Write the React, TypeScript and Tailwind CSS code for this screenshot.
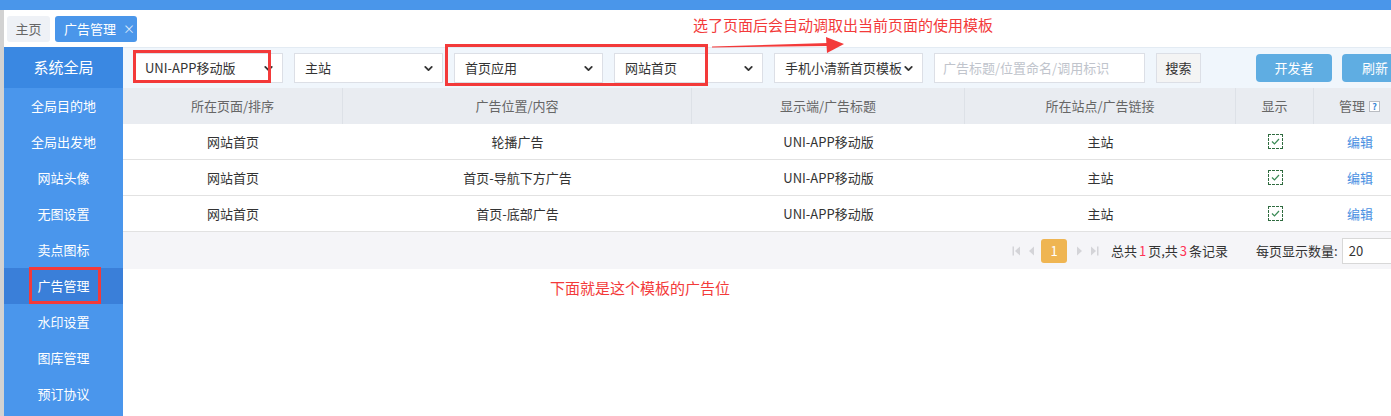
import { ChevronDown } from "lucide-react";

const FONT = "font-['Noto_Sans_CJK_SC','Liberation_Sans',sans-serif]";

const menu = ["全局目的地", "全局出发地", "网站头像", "无图设置", "卖点图标", "广告管理", "水印设置", "图库管理", "预订协议"];

const rows = [
  { page: "网站首页", pos: "轮播广告" },
  { page: "网站首页", pos: "首页-导航下方广告" },
  { page: "网站首页", pos: "首页-底部广告" },
];

const COLS = "grid grid-cols-[220px_349px_273px_271px_78px_92px]";

function Select({ label }: { label: string }) {
  return (
    <div className="w-[149px] h-[30px] shrink-0 bg-white border border-[#dcdfe6] flex items-center justify-between pl-[10px] pr-[7px] text-[13px] text-[#333]">
      <span className="whitespace-nowrap">{label}</span>
      <ChevronDown size={13} strokeWidth={3.4} className="text-[#333] shrink-0" />
    </div>
  );
}

function CheckBox() {
  return (
    <div className="w-[15px] h-[15px] border border-dashed border-[#2f6b3f] flex items-center justify-center">
      <svg width="9" height="7" viewBox="0 0 9 7">
        <path d="M1 3.5 L3.5 6 L8 1" fill="none" stroke="#3a8a55" strokeWidth="1.2" />
      </svg>
    </div>
  );
}

function PageIcon({ dir, bar }: { dir: "l" | "r"; bar?: boolean }) {
  return (
    <svg width="9" height="10" viewBox="0 0 9 10">
      {dir === "l" ? (
        <>
          {bar && <rect x="0.5" y="0.5" width="1.5" height="9" fill="#d4d4d8" />}
          <path d={bar ? "M8 0.5 L3 5 L8 9.5 Z" : "M7 0.5 L2 5 L7 9.5 Z"} fill="#d4d4d8" />
        </>
      ) : (
        <>
          <path d={bar ? "M1 0.5 L6 5 L1 9.5 Z" : "M2 0.5 L7 5 L2 9.5 Z"} fill="#d4d4d8" />
          {bar && <rect x="7" y="0.5" width="1.5" height="9" fill="#d4d4d8" />}
        </>
      )}
    </svg>
  );
}

export default function App() {
  return (
    <div className={`${FONT} relative w-[1391px] h-[416px] overflow-hidden bg-white`}>
      <div className="h-[10px] bg-[#4a96ea]" />
      <div className="flex h-[406px]">
        {/* page behind the frame */}
        <div className="w-[4px] shrink-0 bg-[#d2d2d2]" />
        <div className="flex-1 flex flex-col min-w-0">
          {/* tabs */}
          <div className="h-[37px] shrink-0 flex items-start pt-[6px] pl-[3px] gap-[5px] bg-white whitespace-nowrap">
            <div className="h-[26px] w-[43px] shrink-0 rounded-[3px] bg-[#eef1f6] flex items-center justify-center text-[13px] text-[#666]">
              主页
            </div>
            <div className="h-[26px] w-[82px] shrink-0 rounded-[3px] bg-[#4a96ea] flex items-center pl-[9px] gap-[7px] text-[13px] text-white">
              <span>广告管理</span>
              <span className="text-[12px] text-[#dbe9fb]">×</span>
            </div>
          </div>

          <div className="flex flex-1 min-h-0">
            {/* sidebar */}
            <div className="w-[119px] shrink-0 bg-[#4a96ec] flex flex-col">
              <div className="h-[41px] bg-[#3a88e2] flex items-center justify-center text-[15px] text-white">系统全局</div>
              {menu.map((m) => (
                <div
                  key={m}
                  className={`h-[36px] flex items-center justify-center text-[13px] text-white ${m === "广告管理" ? "bg-[#3a7fd9]" : ""}`}
                >
                  {m}
                </div>
              ))}
            </div>

            {/* main */}
            <div className="flex-1 min-w-0 overflow-hidden flex flex-col">
              <div className="h-[41px] shrink-0 bg-[#f0f6fc] border-t border-[#e3ebf3] flex items-center pl-[11px] gap-[11px] whitespace-nowrap">
                <Select label="UNI-APP移动版" />
                <Select label="主站" />
                <Select label="首页应用" />
                <Select label="网站首页" />
                <Select label="手机小清新首页模板" />
                <div className="w-[211px] h-[30px] shrink-0 bg-white border border-[#dcdfe6] flex items-center px-[8px] text-[13px] text-[#c0c4cc]">
                  广告标题/位置命名/调用标识
                </div>
                <div className="w-[45px] h-[30px] shrink-0 bg-[#f4f4f4] border border-[#dcdfe6] flex items-center justify-center text-[13px] text-[#333]">
                  搜索
                </div>
                <div className="ml-[44px] w-[76px] h-[28px] shrink-0 rounded-[4px] bg-[#5fade2] flex items-center justify-center text-[13px] text-white">
                  开发者
                </div>
                <div className="ml-[-1px] w-[66px] h-[28px] shrink-0 rounded-[4px] bg-[#5fade2] flex items-center justify-center text-[13px] text-white">
                  刷新
                </div>
              </div>

              <div className="w-[1283px]">
                <div className={`${COLS} h-[36px] bg-[#e9ecf1] text-[13px] text-[#666]`}>
                  {["所在页面/排序", "广告位置/内容", "显示端/广告标题", "所在站点/广告链接", "显示"].map((h) => (
                    <div key={h} className="flex items-center justify-center border-r border-[#dde1e7]">
                      {h}
                    </div>
                  ))}
                  <div className="flex items-center justify-center gap-[4px] pr-[1px]">
                    <span>管理</span>
                    <span className="w-[11px] h-[11px] border border-[#b9bcc2] bg-white flex items-center justify-center text-[9px] font-bold leading-none text-[#3b86d6]">
                      ?
                    </span>
                  </div>
                </div>
                {rows.map((r, i) => (
                  <div key={i} className={`${COLS} h-[36px] border-b border-[#e2e2e2] text-[13px] text-[#333]`}>
                    <div className="flex items-center justify-center">{r.page}</div>
                    <div className="flex items-center justify-center">{r.pos}</div>
                    <div className="flex items-center justify-center">UNI-APP移动版</div>
                    <div className="flex items-center justify-center">主站</div>
                    <div className="flex items-center justify-center">
                      <CheckBox />
                    </div>
                    <div className="flex items-center justify-center text-[#4a90e2]">编辑</div>
                  </div>
                ))}
                <div className="h-[37px] bg-[#f5f5f8] flex items-center pl-[889px] text-[13px] text-[#333] whitespace-nowrap">
                  <div className="flex items-center gap-[6px]">
                    <PageIcon dir="l" bar />
                    <PageIcon dir="l" />
                  </div>
                  <div className="ml-[5px] w-[26px] h-[24px] rounded-[3px] bg-[#efb552] flex items-center justify-center text-white text-[13px]">
                    1
                  </div>
                  <div className="ml-[8px] flex items-center gap-[6px]">
                    <PageIcon dir="r" />
                    <PageIcon dir="r" bar />
                  </div>
                  <div className="ml-[12px]">
                    总共<span className="mx-[2px] text-[#ff3355]">1</span>页,共<span className="mx-[2px] text-[#ff3355]">3</span>条记录
                  </div>
                  <div className="ml-[28px]">每页显示数量:</div>
                  <div className="ml-[4px] w-[60px] h-[26px] bg-white border border-[#d8d8d8] flex items-center pl-[6px]">20</div>
                </div>
              </div>
            </div>
          </div>
        </div>
      </div>

      {/* annotations */}
      <div className="absolute left-[133px] top-[50px] w-[138px] h-[33px] border-[3px] border-[#f33a3a]" />
      <div className="absolute left-[445px] top-[44px] w-[263px] h-[42px] border-[3px] border-[#f33a3a]" />
      <div className="absolute left-[29px] top-[267px] w-[72px] h-[37px] border-[3px] border-[#f33a3a]" />
      <svg className="absolute left-[710px] top-[36px]" width="136" height="20" viewBox="0 0 136 20">
        <path d="M2 10.5 L118 7 L118 10 L2 11.5 Z" fill="#f33a3a" />
        <path d="M116 1 L134 8 L117 17 Z" fill="#f33a3a" />
      </svg>
      <div className="absolute left-[693px] top-[14px] text-[15px] leading-[22px] text-[#f33a3a] whitespace-nowrap">
        选了页面后会自动调取出当前页面的使用模板
      </div>
      <div className="absolute left-[550px] top-[277px] text-[15px] leading-[22px] text-[#f33a3a] whitespace-nowrap">
        下面就是这个模板的广告位
      </div>
    </div>
  );
}
